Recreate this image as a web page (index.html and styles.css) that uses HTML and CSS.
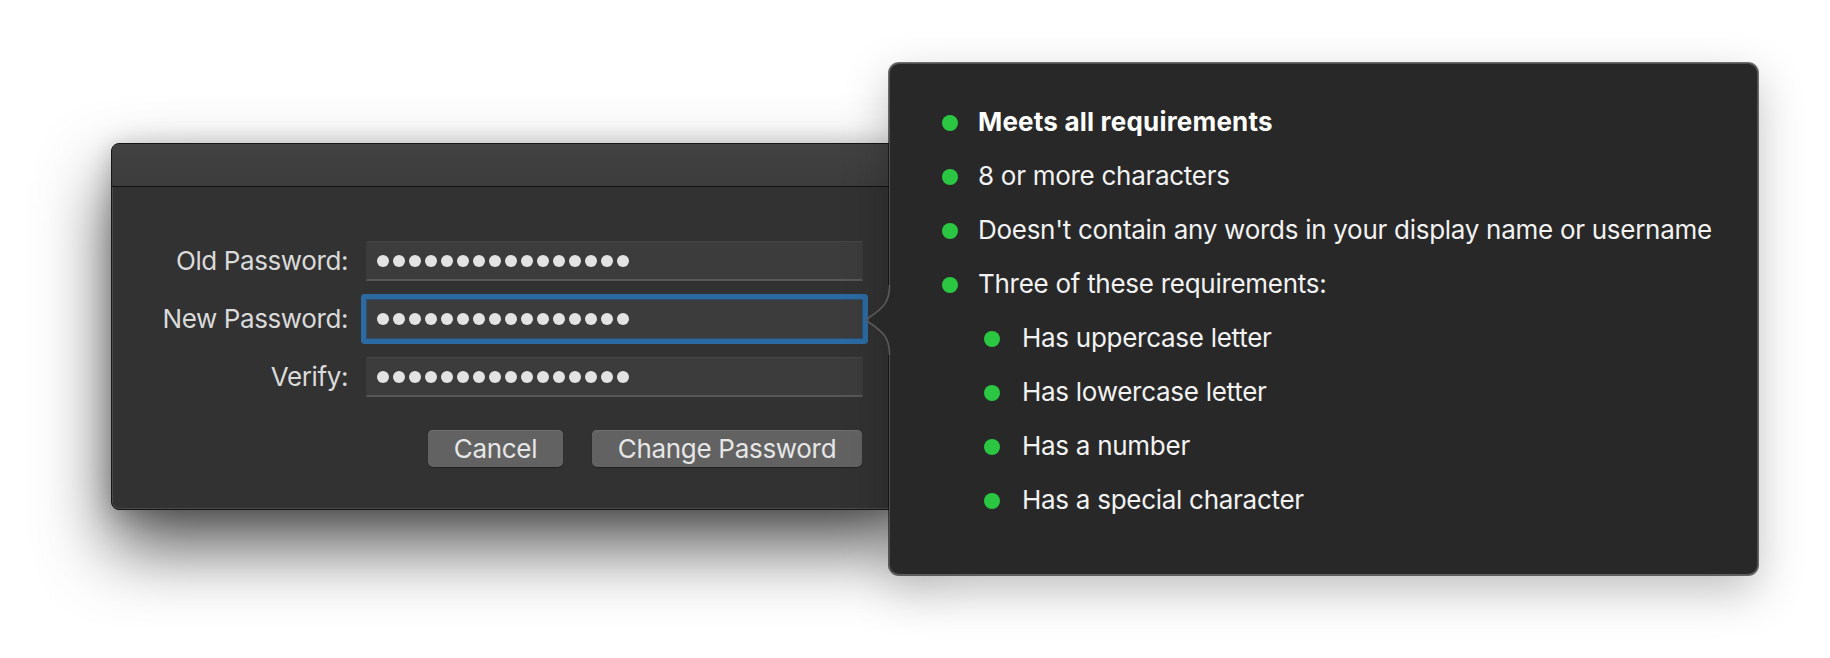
FILE: index.html
```html
<!DOCTYPE html>
<html lang="en">
<head>
<meta charset="utf-8">
<title>Change Password</title>
<link rel="stylesheet" href="styles.css">
</head>
<body>
<div class="stage">
  <div class="dialog">
    <div class="titlebar"></div>
    <div class="dialog-body">
      <div class="form">
        <label class="label">Old Password:</label>
        <div class="field">
          <span class="dot"></span><span class="dot"></span><span class="dot"></span><span class="dot"></span><span class="dot"></span><span class="dot"></span><span class="dot"></span><span class="dot"></span><span class="dot"></span><span class="dot"></span><span class="dot"></span><span class="dot"></span><span class="dot"></span><span class="dot"></span><span class="dot"></span><span class="dot"></span>
        </div>
        <label class="label">New Password:</label>
        <div class="field field-focus">
          <span class="dot"></span><span class="dot"></span><span class="dot"></span><span class="dot"></span><span class="dot"></span><span class="dot"></span><span class="dot"></span><span class="dot"></span><span class="dot"></span><span class="dot"></span><span class="dot"></span><span class="dot"></span><span class="dot"></span><span class="dot"></span><span class="dot"></span><span class="dot"></span>
        </div>
        <label class="label">Verify:</label>
        <div class="field">
          <span class="dot"></span><span class="dot"></span><span class="dot"></span><span class="dot"></span><span class="dot"></span><span class="dot"></span><span class="dot"></span><span class="dot"></span><span class="dot"></span><span class="dot"></span><span class="dot"></span><span class="dot"></span><span class="dot"></span><span class="dot"></span><span class="dot"></span><span class="dot"></span>
        </div>
      </div>
      <div class="buttons">
        <button class="btn btn-cancel">Cancel</button>
        <button class="btn btn-primary">Change Password</button>
      </div>
    </div>
  </div>

  <div class="popover">
    <svg class="arrow" width="26" height="70" viewBox="0 0 26 70">
      <path class="arrow-fill" d="M26 0 L23.5 0 C23.5 16 19 22 2.5 33 Q0.5 35 2.5 37 C19 48 23.5 54 23.5 70 L26 70 Z"/>
      <path class="arrow-edge" d="M23.5 0 C23.5 16 19 22 2.5 33 Q0.5 35 2.5 37 C19 48 23.5 54 23.5 70"/>
    </svg>
    <ul class="reqs">
      <li class="req req-strong"><span class="bullet"></span><span>Meets all requirements</span></li>
      <li class="req"><span class="bullet"></span><span>8 or more characters</span></li>
      <li class="req"><span class="bullet"></span><span>Doesn't contain any words in your display name or username</span></li>
      <li class="req"><span class="bullet"></span><span>Three of these requirements:</span></li>
      <li class="req req-sub"><span class="bullet"></span><span>Has uppercase letter</span></li>
      <li class="req req-sub"><span class="bullet"></span><span>Has lowercase letter</span></li>
      <li class="req req-sub"><span class="bullet"></span><span>Has a number</span></li>
      <li class="req req-sub"><span class="bullet"></span><span>Has a special character</span></li>
    </ul>
  </div>
</div>
</body>
</html>
```

FILE: styles.css
```css
* {
  box-sizing: border-box;
}

html, body {
  margin: 0;
  padding: 0;
  background: #ffffff;
}

body {
  width: 1830px;
  height: 658px;
  overflow: hidden;
  font-family: "Inter", "Liberation Sans", sans-serif;
}

.stage {
  position: relative;
  width: 1830px;
  height: 658px;
  padding: 143px 0 0 111px;
}

/* ---------- Dialog ---------- */
.dialog {
  width: 800px;
  background: #323232;
  border: 1px solid #161616;
  border-radius: 8px;
  overflow: hidden;
  box-shadow:
    inset 0 0 0 1px rgba(255, 255, 255, 0.12),
    0 36px 70px rgba(0, 0, 0, 0.68),
    0 4px 26px rgba(0, 0, 0, 0.22);
}

.titlebar {
  height: 43px;
  background: linear-gradient(#424242, #3c3c3c);
  border-bottom: 1px solid #121212;
}

.dialog-body {
  padding: 54px 0 42px 0;
}

.form {
  display: grid;
  grid-template-columns: 236px 497px;
  grid-auto-rows: 40px;
  column-gap: 18px;
  row-gap: 18px;
  align-items: center;
}

.label {
  text-align: right;
  font-size: 26px;
  letter-spacing: -0.4px;
  color: #dadada;
  line-height: 40px;
}

.field {
  height: 40px;
  background: #3c3c3c;
  border-top: 1px solid #454545;
  border-left: 1px solid #3a3a3a;
  border-right: 1px solid #3a3a3a;
  border-bottom: 2px solid #575757;
  border-radius: 1px;
  display: flex;
  align-items: center;
  gap: 4px;
  padding-left: 10px;
}

.field-focus {
  border: 1px solid #274f72;
  box-shadow: 0 0 0 5px #2c6aa1;
}

.dot {
  width: 12px;
  height: 12px;
  border-radius: 50%;
  background: #e3e3e3;
  flex: none;
}

.buttons {
  width: 751px;
  margin-top: 33px;
  padding-right: 1px;
  display: flex;
  justify-content: flex-end;
  gap: 29px;
}

.btn {
  height: 37px;
  border: none;
  border-radius: 5px;
  background: #626262;
  box-shadow: inset 0 1px 0 #6e6e6e, 0 1px 1px rgba(0, 0, 0, 0.35);
  color: #e6e6e6;
  font-family: "Inter", "Liberation Sans", sans-serif;
  font-size: 26px;
  letter-spacing: -0.3px;
  line-height: 37px;
  padding: 0;
  text-align: center;
}

.btn-cancel {
  width: 135px;
}

.btn-primary {
  width: 270px;
}

/* ---------- Popover ---------- */
.popover {
  position: absolute;
  left: 889px;
  top: 63px;
  width: 869px;
  height: 512px;
  background: #282828;
  border: 1px solid #505050;
  border-bottom-color: #5f5f5f;
  border-radius: 10px;
  box-shadow:
    0 0 0 1px rgba(0, 0, 0, 0.55),
    0 16px 46px rgba(0, 0, 0, 0.25);
}

.arrow {
  position: absolute;
  left: -24px;
  top: 221px;
  display: block;
}

.arrow-fill {
  fill: #282828;
}

.arrow-edge {
  fill: none;
  stroke: #585858;
  stroke-width: 1.8;
}

.reqs {
  list-style: none;
  margin: 0;
  padding: 30px 0 0 52px;
}

.req {
  height: 54px;
  display: flex;
  align-items: center;
  gap: 20px;
  font-size: 26px;
  letter-spacing: -0.28px;
  color: #f2f2f2;
}

.req-strong {
  font-weight: 700;
  letter-spacing: 0.2px;
  color: #ffffff;
}

.req-sub {
  padding-left: 42px;
  gap: 22px;
}

.bullet {
  width: 16px;
  height: 16px;
  border-radius: 50%;
  background: #2bc642;
  flex: none;
  transform: translateY(2px);
}
```
